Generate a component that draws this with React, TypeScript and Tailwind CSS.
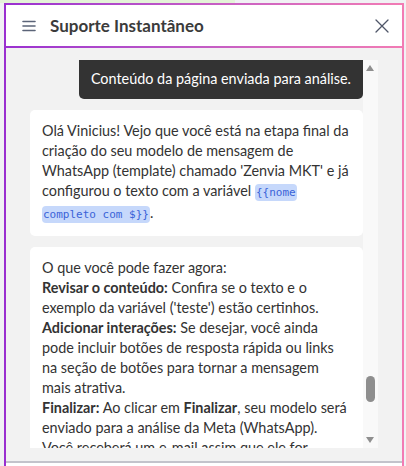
import React from "react";

const font = { fontFamily: "Lato, 'Noto Sans', sans-serif" };

function MenuIcon() {
  return (
    <svg width="14" height="12" viewBox="0 0 14 12" fill="none" stroke="#5b6478" strokeWidth="1.6" strokeLinecap="round">
      <path d="M1 1.5h12M1 6h12M1 10.5h12" />
    </svg>
  );
}

function CloseIcon() {
  return (
    <svg width="14" height="14" viewBox="0 0 14 14" fill="none" stroke="#4f5668" strokeWidth="1.3" strokeLinecap="round">
      <path d="M1 1l12 12M13 1L1 13" />
    </svg>
  );
}

function Code({ children }: { children: React.ReactNode }) {
  return (
    <code className="rounded-[4px] bg-[#c6d8fb] px-[1px] py-[2px] text-[11px] text-[#3a63d8] [box-decoration-break:clone] [font-family:'DejaVu_Sans_Mono',monospace]">
      {children}
    </code>
  );
}

export default function App() {
  return (
    <div className="flex h-[466px] w-[406px] flex-col overflow-hidden bg-[#f1f1f4]" style={font}>
      <div className="flex h-[3px] shrink-0">
        <div className="w-[235px] bg-[#e4f3d8]" />
        <div className="flex-1 bg-[#f1f1f4]" />
      </div>

      <div className="ml-[4px] mr-[2px] flex flex-1 flex-col bg-gradient-to-r from-[#9a2fd0] to-[#f27cb4] px-[2px] pt-[2px]">
        <div className="flex h-[41px] shrink-0 items-center bg-white pl-[16px] pr-[13px]">
          <MenuIcon />
          <h1 className="ml-[14px] flex-1 text-[17px] font-bold text-[#3b3b3b]">Suporte Instantâneo</h1>
          <CloseIcon />
        </div>
        <div className="h-[2px] shrink-0" />

        <div className="flex flex-1 flex-col bg-[#f2f2f2]">
          <div className="ml-[24px] mt-[12px] flex h-[388px]">
            <div className="flex w-[333px] flex-col gap-[11px] overflow-hidden text-[14.4px] leading-[20px] text-[#333]">
              <div className="ml-auto rounded-b-[5px] bg-[#333333] px-[12px] pb-[10px] pt-[9px] text-white">
                Conteúdo da página enviada para análise.
              </div>

              <div className="rounded-[5px] bg-white px-[12px] pb-[11px] pt-[11px]">
                Olá Vinicius! Vejo que você está na etapa final da criação do seu modelo de mensagem de WhatsApp (template) chamado 'Zenvia MKT' e já configurou o texto com a variável{" "}
                <Code>{"{{nome completo com $}}"}</Code>.
              </div>

              <div className="shrink-0 rounded-t-[5px] bg-white px-[12px] pt-[11px]">
                <p>O que você pode fazer agora:</p>
                <p>
                  <b>Revisar o conteúdo:</b> Confira se o texto e o exemplo da variável ('teste') estão certinhos.
                </p>
                <p>
                  <b>Adicionar interações:</b> Se desejar, você ainda pode incluir botões de resposta rápida ou links na seção de botões para tornar a mensagem mais atrativa.
                </p>
                <p>
                  <b>Finalizar:</b> Ao clicar em <b>Finalizar</b>, seu modelo será enviado para a análise da Meta (WhatsApp). Você receberá um e-mail assim que ele for aprovado.
                </p>
              </div>
            </div>

            <div className="relative w-[15px] bg-[#f9f9f9]">
              <div className="absolute left-[3px] top-[5px] h-0 w-0 border-x-[4.5px] border-b-[6px] border-x-transparent border-b-[#8f8f8f]" />
              <div className="absolute left-[3px] top-[316px] h-[26px] w-[9px] rounded-full bg-[#8e8e8e]" />
              <div className="absolute bottom-[5px] left-[3px] h-0 w-0 border-x-[4.5px] border-t-[6px] border-x-transparent border-t-[#8f8f8f]" />
            </div>
          </div>
          <div className="mt-[13px] h-[2px] bg-[#c3c3cb]" />
          <div className="flex-1 bg-white" />
        </div>
      </div>
    </div>
  );
}
